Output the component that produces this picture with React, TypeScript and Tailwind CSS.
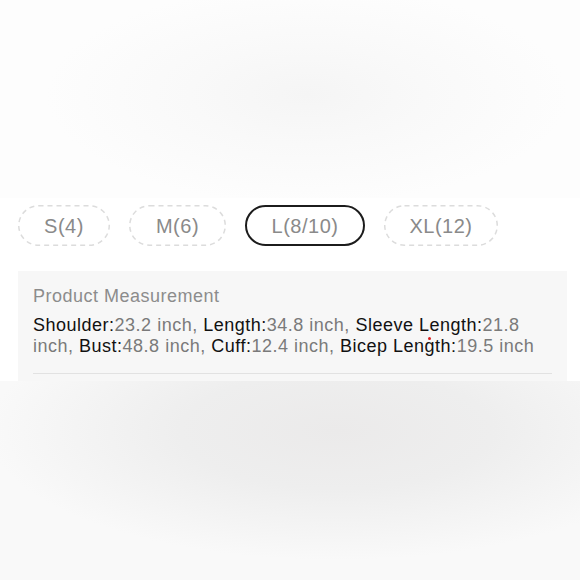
import React from "react";

type Chip = { label: string; w: number; active?: boolean };

const chips: Chip[] = [
  { label: "S(4)", w: 92 },
  { label: "M(6)", w: 97 },
  { label: "L(8/10)", w: 120, active: true },
  { label: "XL(12)", w: 114 },
];

const measures: [string, string][] = [
  ["Shoulder", "23.2"],
  ["Length", "34.8"],
  ["Sleeve Length", "21.8"],
  ["Bust", "48.8"],
  ["Cuff", "12.4"],
  ["Bicep Length", "19.5"],
];

function SizeChip({ chip }: { chip: Chip }) {
  const h = 41;
  return (
    <div
      className={
        "relative flex h-[41px] shrink-0 items-center justify-center rounded-full text-[20px] tracking-[0.5px] text-[#8a8a8a] " +
        (chip.active ? "border-2 border-[#1c1c1c]" : "")
      }
      style={{ width: chip.w }}
    >
      {!chip.active && (
        <svg
          className="pointer-events-none absolute inset-0"
          width={chip.w}
          height={h}
          viewBox={`0 0 ${chip.w} ${h}`}
        >
          <rect
            x={0.75}
            y={0.75}
            width={chip.w - 1.5}
            height={h - 1.5}
            rx={(h - 1.5) / 2}
            fill="none"
            stroke="#dcdcdc"
            strokeWidth={1.5}
            strokeDasharray="5 4"
          />
        </svg>
      )}
      <span className="relative">{chip.label}</span>
    </div>
  );
}

export default function App() {
  return (
    <div className="flex h-[580px] w-[580px] flex-col overflow-hidden font-['Liberation_Sans',Arial,sans-serif]">
      <div className="h-[198px] shrink-0 bg-[radial-gradient(ellipse_45%_55%_at_53%_48%,#f5f5f5_0%,#f9f9f9_45%,#fdfdfd_100%)]" />
      <div className="flex h-[183px] shrink-0 flex-col bg-white pt-[7px]">
        <div className="flex gap-[19px] pl-[18px]">
          {chips.map((c) => (
            <SizeChip key={c.label} chip={c} />
          ))}
        </div>
        <div className="relative ml-[18px] mr-[13px] mt-[25px] flex-1 overflow-hidden bg-[#f7f7f7] px-[15px] pt-[15px]">
          <div className="text-[18px] leading-[21px] tracking-[0.5px] text-[#8c8c8c]">
            Product Measurement
          </div>
          <p className="mt-[8px] text-[18px] leading-[21px] tracking-[0.5px] text-[#7a7a7a]">
            {measures.map(([k, v], i) => (
              <React.Fragment key={k}>
                <span className="text-[#111111]">{k}:</span>
                <span>{v}</span> <span>{i < measures.length - 1 ? "inch," : "inch"}</span>{" "}
              </React.Fragment>
            ))}
          </p>
          <div className="mt-[16px] h-px bg-[#e2e2e2]" />
          <span className="absolute left-[410px] top-[66px] h-[3px] w-[3px] rounded-full bg-[#d81e1e]" />
        </div>
      </div>
      <div className="flex-1 bg-[radial-gradient(ellipse_60%_65%_at_58%_25%,#ebeaea_0%,#eeeeee_45%,#f9f9f9_100%)]" />
    </div>
  );
}
